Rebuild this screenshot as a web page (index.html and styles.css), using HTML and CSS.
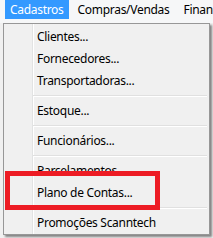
FILE: index.html
```html
<!DOCTYPE html>
<html lang="pt">
<head>
    <meta charset="UTF-8">
    <meta name="viewport" content="width=device-width, initial-scale=1.0">
    <title>Cadastros</title>
    <link rel="stylesheet" href="styles.css">
</head>
<body>
    <div class="menubar">
        <div class="bar-item active">Cadastros</div>
        <div class="bar-item">Compras/Vendas</div>
        <div class="bar-item">Financeiro</div>
    </div>

    <div class="dropdown">
        <div class="item">Clientes...</div>
        <div class="item">Fornecedores...</div>
        <div class="item">Transportadoras...</div>
        <div class="sep"></div>
        <div class="item">Estoque...</div>
        <div class="sep"></div>
        <div class="item">Funcionários...</div>
        <div class="sep"></div>
        <div class="item">Parcelamentos...</div>
        <div class="item">Plano de Contas...</div>
        <div class="sep"></div>
        <div class="item">Promoções Scanntech</div>
    </div>

    <div class="highlight"></div>
</body>
</html>
```

FILE: styles.css
```css
body {
    margin: 0;
    width: 213px;
    height: 238px;
    overflow: hidden;
    position: relative;
    background: #f0f0f0;
    font-family: 'Segoe UI', 'Noto Sans', sans-serif;
    font-size: 12px;
    letter-spacing: -0.3px;
    color: #000;
}

.menubar {
    display: flex;
    height: 23px;
    padding-left: 3px;
    background: #f6f7f8;
    white-space: nowrap;
    overflow: hidden;
}

.bar-item {
    height: 19px;
    line-height: 19px;
    padding: 0 5px;
    margin: 0 2px;
}

.active {
    background: #3399ff;
    color: #fff;
}

.dropdown {
    width: 205px;
    margin-left: 3px;
    padding: 2px 0 0 0;
    background: #f0f0f0 linear-gradient(to right, transparent 28px, #e2e3e3 28px, #e2e3e3 29px, #fff 29px, #fff 30px, transparent 30px);
    border: 1px solid #979797;
    box-shadow: 2px 2px 2px rgba(0, 0, 0, 0.45);
}

.item {
    height: 22px;
    line-height: 22px;
    padding-left: 33px;
    white-space: nowrap;
}

.sep {
    height: 8px;
    margin: 0 2px 0 29px;
    display: flex;
    flex-direction: column;
    justify-content: center;
}

.sep::before {
    content: '';
    height: 1px;
    background: #e0e0e0;
    border-bottom: 1px solid #fff;
}

.highlight {
    position: absolute;
    left: 5px;
    top: 171px;
    width: 155px;
    height: 39px;
    box-sizing: border-box;
    border: 5px solid #ed1c24;
}
```
